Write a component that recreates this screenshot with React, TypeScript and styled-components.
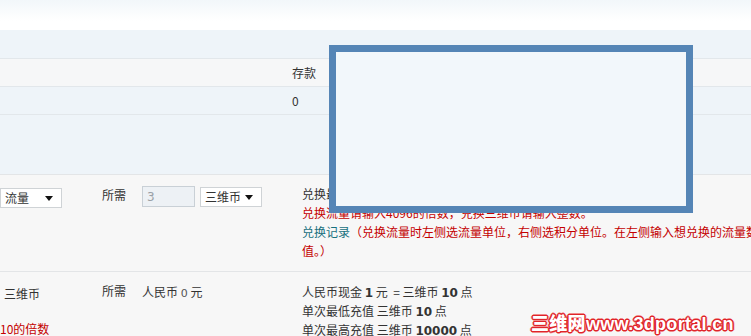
import React from 'react';
import styled, { createGlobalStyle } from 'styled-components';

const GlobalStyle = createGlobalStyle`
  html, body {
    margin: 0;
    padding: 0;
    background: #eef4f9;
  }
  body {
    font-family: "Noto Sans CJK SC", "Liberation Sans", sans-serif;
    font-size: 12px;
    color: #333;
  }
`;

const App: React.FC = () => (
  <Page>
    <GlobalStyle />
    <TopBar />
    <Band $height={28} />
    <SummaryRow $header>
      <Cell />
      <Cell>存款</Cell>
    </SummaryRow>
    <SummaryRow $last>
      <Cell />
      <Cell>0</Cell>
    </SummaryRow>
    <Band $height={59} />

    <FormRow $height={96}>
      <LeftCol $pad={12}>
        <FakeSelect $width={62}>流量</FakeSelect>
      </LeftCol>
      <MidCol $pad={11}>
        <Label>所需</Label>
        <Amount disabled value="3" readOnly />
        <FakeSelect $width={62}>三维币</FakeSelect>
      </MidCol>
      <InfoCol $pad={9}>
        <Line>兑换最低限额为 3 三维币</Line>
        <Line $red>兑换流量请输入4096的倍数，兑换三维币请输入整数。</Line>
        <Line $red $wrap>
          <Teal>兑换记录</Teal>（兑换流量时左侧选流量单位，右侧选积分单位。在左侧输入想兑换的流量数值。）
        </Line>
      </InfoCol>
    </FormRow>

    <FormRow $height={70}>
      <LeftCol $pad={12}>
        <Line $indent={4}>三维币</Line>
        <Line $red $gap={16}>10的倍数</Line>
      </LeftCol>
      <MidCol $pad={10}>
        <Label>所需</Label>
        <Plain>
          人民币 <Num>0</Num> 元
        </Plain>
      </MidCol>
      <InfoCol $pad={10}>
        <Line>
          人民币现金 <Strong>1</Strong> 元 &nbsp;= 三维币 <Strong>10</Strong> 点
        </Line>
        <Line>
          单次最低充值 三维币 <Strong>10</Strong> 点
        </Line>
        <Line>
          单次最高充值 三维币 <Strong>10000</Strong> 点
        </Line>
      </InfoCol>
    </FormRow>

    <Dialog />
    <Watermark>
      <WmCn>三维网</WmCn>www.3dportal.cn
    </Watermark>
  </Page>
);

const Page = styled.div`
  position: relative;
  width: 751px;
  height: 336px;
  overflow: hidden;
  background: #eef4f9;
`;

const TopBar = styled.div`
  height: 30px;
  background: linear-gradient(#f2f7fa, #ffffff 70%);
`;

const Band = styled.div<{ $height: number }>`
  height: ${(p) => p.$height}px;
`;

const SummaryRow = styled.div<{ $header?: boolean; $last?: boolean }>`
  display: grid;
  grid-template-columns: 292px 1fr;
  height: 27px;
  align-items: center;
  border-top: 1px solid #e2e7eb;
  border-bottom: ${(p) => (p.$last ? '1px solid #e2e7eb' : 'none')};
  background: ${(p) => (p.$header ? '#f6f7f8' : '#eef4f9')};
`;

const Cell = styled.div`
  line-height: 27px;
`;

const FormRow = styled.div<{ $height: number }>`
  display: grid;
  grid-template-columns: 102px 200px 470px;
  border-top: 1px solid #e3e5e7;
  background: #f7f7f7;
  height: ${(p) => p.$height}px;
`;

const LeftCol = styled.div<{ $pad: number }>`
  padding-top: ${(p) => p.$pad}px;
`;

const MidCol = styled.div<{ $pad: number }>`
  padding-top: ${(p) => p.$pad}px;
  display: flex;
  align-items: flex-start;
  gap: 5px;
  height: 21px;
`;

const InfoCol = styled.div<{ $pad: number }>`
  padding-top: ${(p) => p.$pad}px;
`;

const Label = styled.span`
  width: 35px;
  line-height: 19px;
  margin-top: -1px;
`;

const Plain = styled.span`
  line-height: 19px;
`;

const Num = styled.span`
  font-family: "DejaVu Sans", sans-serif;
  font-size: 11px;
  color: #555;
`;

const Line = styled.div<{ $red?: boolean; $indent?: number; $gap?: number; $wrap?: boolean }>`
  line-height: 19px;
  height: ${(p) => (p.$wrap ? 38 : 19)}px;
  width: ${(p) => (p.$wrap ? '458px' : 'auto')};
  white-space: ${(p) => (p.$wrap ? 'normal' : 'nowrap')};
  color: ${(p) => (p.$red ? '#c40000' : '#333')};
  padding-left: ${(p) => p.$indent ?? 0}px;
  margin-top: ${(p) => p.$gap ?? 0}px;
`;

const Teal = styled.span`
  color: #17707e;
`;

const Strong = styled.b`
  font-family: "DejaVu Sans", sans-serif;
  font-size: 12px;
  line-height: 12px;
  color: #333;
`;

const FakeSelect = styled.div<{ $width: number }>`
  position: relative;
  box-sizing: border-box;
  width: ${(p) => p.$width}px;
  height: 20px;
  margin-top: 1px;
  padding-left: 4px;
  line-height: 18px;
  font-size: 12px;
  background: #fff;
  border: 1px solid #cfd3d6;
  &::after {
    content: '';
    position: absolute;
    right: 8px;
    top: 7px;
    border-left: 4px solid transparent;
    border-right: 4px solid transparent;
    border-top: 5px solid #111;
  }
`;

const Amount = styled.input`
  box-sizing: border-box;
  width: 53px;
  height: 21px;
  margin: 0;
  padding: 0 4px;
  border: 1px solid #c9d0d6;
  background: #edf1f5;
  color: #9aa0a6;
  font-family: "DejaVu Sans", sans-serif;
  font-size: 12px;
`;

const Dialog = styled.div`
  position: absolute;
  left: 329px;
  top: 45px;
  width: 364px;
  height: 168px;
  box-sizing: border-box;
  border: 7px solid #5585b6;
  background: #f2f7fb;
`;

const Watermark = styled.div`
  position: absolute;
  left: 531px;
  top: 311px;
  font-family: "Liberation Sans", sans-serif;
  font-weight: bold;
  font-size: 18px;
  line-height: 22px;
  color: #fff;
  text-shadow:
    1px 0 0 #e0242a, -1px 0 0 #e0242a, 0 1px 0 #e0242a, 0 -1px 0 #e0242a,
    1px 1px 0 #e0242a, -1px -1px 0 #e0242a, 1px -1px 0 #e0242a, -1px 1px 0 #e0242a,
    2px 0 0 #f08a8a, -2px 0 0 #f08a8a, 0 2px 0 #f08a8a, 0 -2px 0 #f08a8a;
  letter-spacing: 0.3px;
  white-space: nowrap;
`;

const WmCn = styled.span`
  font-family: "Noto Sans CJK SC", sans-serif;
  font-weight: 900;
`;

export default App;
